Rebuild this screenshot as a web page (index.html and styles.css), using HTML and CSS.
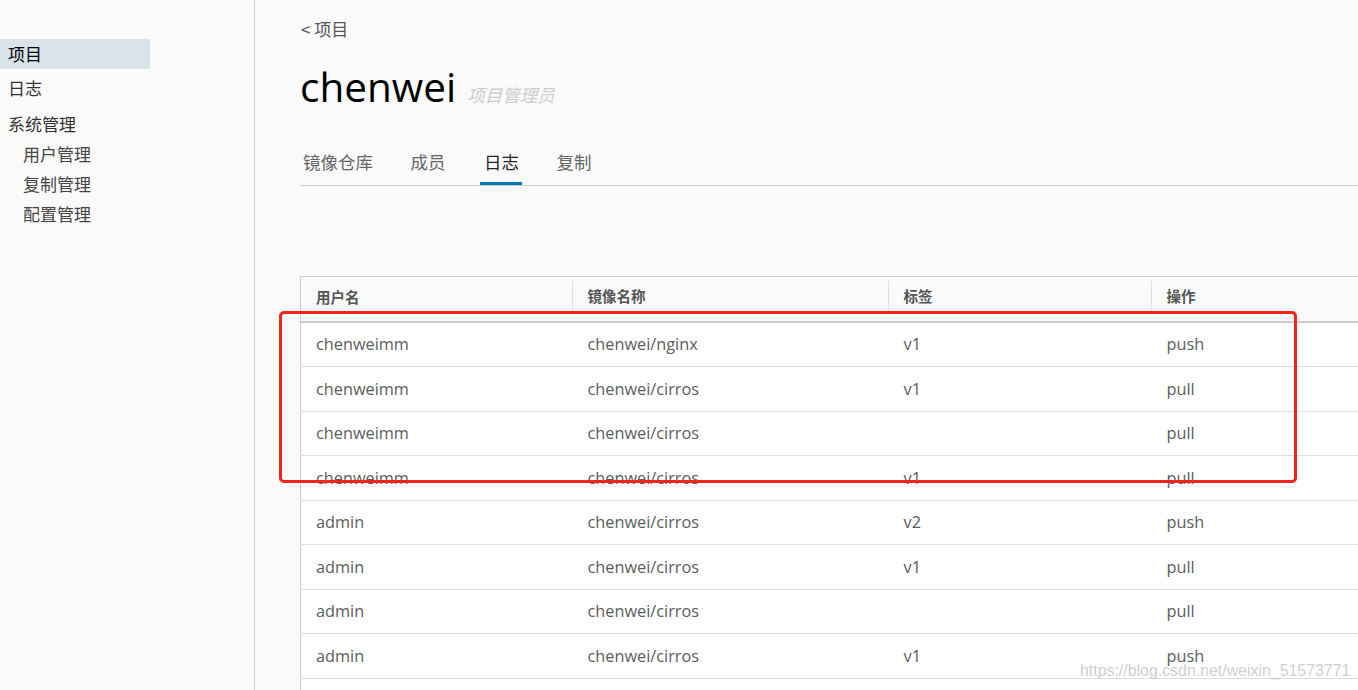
FILE: index.html
```html
<!DOCTYPE html>
<html lang="en">
<head>
  <meta charset="UTF-8" />
  <title>chenwei - 日志</title>
  <link rel="stylesheet" href="styles.css">
</head>
<body>
  <div class="layout">
    <nav class="sidebar">
      <a class="nav-item active">项目</a>
      <a class="nav-item">日志</a>
      <div class="nav-group">系统管理</div>
      <a class="nav-sub">用户管理</a>
      <a class="nav-sub">复制管理</a>
      <a class="nav-sub">配置管理</a>
    </nav>

    <main class="content">
      <div class="back-link">&lt; 项目</div>
      <div class="title-row">
        <h1>chenwei</h1>
        <span class="role">项目管理员</span>
      </div>

      <ul class="tabs">
        <li>镜像仓库</li>
        <li>成员</li>
        <li class="active">日志</li>
        <li>复制</li>
      </ul>

      <table class="grid">
        <thead>
          <tr>
            <th class="c1">用户名</th>
            <th class="c2"><span>镜像名称</span></th>
            <th class="c3"><span>标签</span></th>
            <th class="c4"><span>操作</span></th>
          </tr>
        </thead>
        <tbody>
          <tr><td>chenweimm</td><td>chenwei/nginx</td><td>v1</td><td>push</td></tr>
          <tr><td>chenweimm</td><td>chenwei/cirros</td><td>v1</td><td>pull</td></tr>
          <tr><td>chenweimm</td><td>chenwei/cirros</td><td></td><td>pull</td></tr>
          <tr><td>chenweimm</td><td>chenwei/cirros</td><td>v1</td><td>pull</td></tr>
          <tr><td>admin</td><td>chenwei/cirros</td><td>v2</td><td>push</td></tr>
          <tr><td>admin</td><td>chenwei/cirros</td><td>v1</td><td>pull</td></tr>
          <tr><td>admin</td><td>chenwei/cirros</td><td></td><td>pull</td></tr>
          <tr><td>admin</td><td>chenwei/cirros</td><td>v1</td><td>push</td></tr>
          <tr class="filler"><td></td><td></td><td></td><td></td></tr>
        </tbody>
      </table>
    </main>
  </div>

  <!-- annotation drawn over the screenshot -->
  <div class="highlight"></div>
  <div class="watermark">https://blog.csdn.net/weixin_51573771</div>
</body>
</html>
```

FILE: styles.css
```css
html, body { margin: 0; height: 100%; overflow: hidden; }
body {
  font-family: "Open Sans", "Noto Sans CJK SC", sans-serif;
  background: #fafafa;
  color: #565656;
  position: relative;
}
.layout { display: flex; height: 690px; }

.sidebar {
  width: 255px;
  flex: none;
  border-right: 1px solid #ccc;
  padding-top: 39px;
  box-sizing: border-box;
  font-family: "Noto Sans CJK SC", sans-serif;
  font-size: 17px;
  color: #333;
}
.nav-item, .nav-group { display: block; width: 150px; height: 30px; line-height: 29px; padding-left: 8px; box-sizing: border-box; }
.nav-item { margin-bottom: 5px; }
.nav-item.active { background: #d9e4ea; color: #000; }
.nav-item + .nav-item { line-height: 27px; }
.nav-sub { display: block; height: 30px; line-height: 29px; padding-left: 23px; color: #444; }

.content { flex: 1; padding-left: 45px; min-width: 0; overflow: hidden; }

.back-link {
  font-family: "Noto Sans CJK SC", sans-serif;
  font-size: 17px;
  color: #555;
  margin-top: 16px;
  padding-left: 1px;
  height: 26px;
  line-height: 26px;
}
.title-row { display: flex; align-items: baseline; margin-top: 21px; height: 48px; }
h1 {
  margin: 0;
  font-family: "Open Sans", sans-serif;
  font-weight: 400;
  font-size: 40.5px;
  line-height: 48px;
  color: #000;
}
.role {
  margin-left: 11px;
  font-family: "Noto Sans CJK SC", sans-serif;
  font-style: italic;
  font-size: 17.5px;
  color: #ccc;
}

.tabs {
  list-style: none;
  margin: 38px 0 0;
  padding: 0;
  display: flex;
  gap: 31.5px;
  border-bottom: 1px solid #ccc;
  font-family: "Noto Sans CJK SC", sans-serif;
  font-size: 17.5px;
  color: #666;
}
.tabs li { padding: 0 3px; height: 36px; line-height: 26px; box-sizing: border-box; }
.tabs li.active { color: #222; border-bottom: 3px solid #0079b8; padding: 0 3px 0 4px; margin-bottom: -1px; }

.grid {
  margin-top: 90px;
  width: 1140px;
  border-collapse: collapse;
  border-left: 1px solid #ccc;
  border-top: 1px solid #ccc;
  table-layout: fixed;
  background: #fff;
}
.grid th {
  background: #fafafa;
  height: 45px;
  padding: 0 0 5px;
  box-sizing: border-box;
  text-align: left;
  font-size: 14.5px;
  font-weight: 700;
  color: #555;
  font-family: "Noto Sans CJK SC", sans-serif;
  border-bottom: 2px solid #ccc;
}
.grid th.c1 { width: 271px; padding-left: 15px; }
.grid th.c2 { width: 316px; }
.grid th.c3 { width: 263px; }
.grid th span { display: block; border-left: 1px solid #ddd; padding-left: 15px; line-height: 30px; }
.grid td {
  height: 43.5px;
  padding: 0 0 0 16px;
  font-size: 16.3px;
  color: #5c5c5c;
  border-bottom: 1px solid #ddd;
}
.grid td:first-child { padding-left: 15px; }
.grid tr.filler td { height: 20px; border-bottom: none; }

.highlight {
  position: absolute;
  left: 279px;
  top: 311px;
  width: 1012px;
  height: 166px;
  border: 3px solid #f5211b;
  border-radius: 5px;
}
.watermark {
  position: absolute;
  left: 1080px;
  top: 662px;
  font-family: "Liberation Sans", Arial, sans-serif;
  font-size: 15.9px;
  color: rgba(190, 190, 190, 0.75);
}
```
